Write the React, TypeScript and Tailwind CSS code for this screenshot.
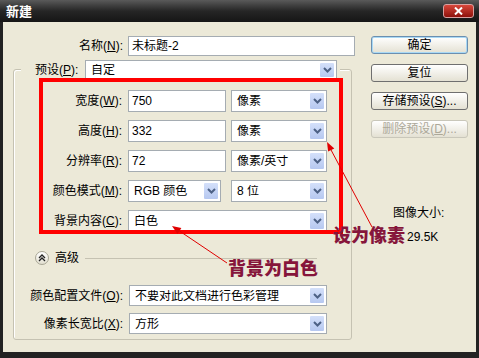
import React from 'react';

// XP-style combo arrow
const Chevron = () => (
  <svg width="9" height="6" viewBox="0 0 9 6">
    <path d="M1 1l3.5 3.5L8 1" stroke="#4D6185" strokeWidth="2" fill="none" />
  </svg>
);

function Label({ text, k, className }: { text: string; k: string; className: string }) {
  return (
    <span className={`shrink-0 text-right ${className}`}>
      {text}(<u>{k}</u>):
    </span>
  );
}

function Field({ value, className }: { value: string; className: string }) {
  return (
    <div className={`flex h-full items-center border border-[#A5ACB2] bg-white pl-[3px] ${className}`}>
      {value}
    </div>
  );
}

function Select({ value, className }: { value: string; className: string }) {
  return (
    <div className={`flex h-full items-center border border-[#A5ACB2] bg-white ${className}`}>
      <span className="flex-1 pl-[5px] whitespace-nowrap overflow-hidden">{value}</span>
      <div className="mr-px flex h-[calc(100%-2px)] w-[16px] items-center justify-center rounded-[2px] border border-white bg-gradient-to-b from-[#D4E0FA] to-[#B6C8F0]">
        <Chevron />
      </div>
    </div>
  );
}

function Button({ children, kind = 'normal' }: { children: React.ReactNode; kind?: 'normal' | 'default' | 'disabled' }) {
  const look =
    kind === 'default'
      ? 'border-[#6B8FB0] shadow-[inset_0_0_0_1px_#A9D9F5] text-black'
      : kind === 'disabled'
        ? 'border-[#C9C7BA] text-[#ACA899]'
        : 'border-[#6F6F6F] text-black';
  return (
    <div
      className={`flex h-[18px] w-[97px] items-center justify-center rounded-[3px] border bg-gradient-to-b from-white to-[#E4E1D3] ${look}`}
    >
      {children}
    </div>
  );
}

export default function App() {
  return (
    <div className="relative flex h-[358px] w-[479px] flex-col overflow-hidden bg-[#222222] text-[12px] leading-none text-black font-['Liberation_Sans','Noto_Sans_CJK_SC',sans-serif]">
      {/* Title bar */}
      <div className="flex h-[22px] shrink-0 items-center justify-between bg-gradient-to-b from-[#5A5A5A] via-[#262626] to-[#151515] pl-[6px] pr-[5px]">
        <span className="text-[13px] font-bold text-white">新建</span>
        <div className="flex h-[14px] w-[31px] items-center justify-center rounded-[3px] border border-[#D8A0A0] bg-gradient-to-b from-[#D8463A] to-[#8E0F0A]">
          <svg width="9" height="8" viewBox="0 0 9 8">
            <path d="M1 0.5l7 7M8 0.5l-7 7" stroke="white" strokeWidth="2" />
          </svg>
        </div>
      </div>

      {/* Body */}
      <div className="mx-[3px] mb-[6px] flex flex-1 bg-[#ECE9D8]">
        {/* Left column */}
        <div className="w-[358px] shrink-0 pl-[10px] pt-[14px]">
          <div className="flex h-[20px] items-center">
            <Label text="名称" k="N" className="w-[110px]" />
            <Field value="未标题-2" className="ml-[5px] w-[227px]" />
          </div>

          {/* Group box */}
          <div className="mt-[13px] h-[271px] w-[339px] rounded-[3px] border border-[#C5C2B2] shadow-[inset_1px_1px_0_#fff]">
            {/* Preset row sits on the frame line */}
            <div className="-mt-[10px] ml-[7px] flex h-[20px] w-[319px] items-center bg-[#ECE9D8]">
              <span className="w-[64px] shrink-0 pl-[14px]">
                预设(<u>P</u>):
              </span>
              <Select value="自定" className="w-[252px]" />
            </div>

            {/* Highlighted area */}
            <div className="relative -mt-[2px] ml-[25px] h-[156px] w-[304px] pt-[12px]">
              <div className="flex flex-col gap-[8px]">
                <div className="flex h-[22px] items-center">
                  <Label text="宽度" k="W" className="w-[83px]" />
                  <Field value="750" className="ml-[6px] w-[98px]" />
                  <Select value="像素" className="ml-[5px] w-[96px]" />
                </div>
                <div className="flex h-[22px] items-center">
                  <Label text="高度" k="H" className="w-[83px]" />
                  <Field value="332" className="ml-[6px] w-[98px]" />
                  <Select value="像素" className="ml-[5px] w-[96px]" />
                </div>
                <div className="flex h-[22px] items-center">
                  <Label text="分辨率" k="R" className="w-[83px]" />
                  <Field value="72" className="ml-[6px] w-[98px]" />
                  <Select value="像素/英寸" className="ml-[5px] w-[96px]" />
                </div>
                <div className="flex h-[22px] items-center">
                  <Label text="颜色模式" k="M" className="w-[83px]" />
                  <Select value="RGB 颜色" className="ml-[6px] w-[93px]" />
                  <Select value="8 位" className="ml-[10px] w-[96px]" />
                </div>
                <div className="flex h-[22px] items-center">
                  <Label text="背景内容" k="C" className="w-[83px]" />
                  <Select value="白色" className="ml-[6px] w-[199px]" />
                </div>
              </div>
              <div className="pointer-events-none absolute inset-0 border-4 border-[#FF0000]" />
            </div>

            {/* Advanced */}
            <div className="mt-[17px] flex h-[14px] items-center">
              <div className="ml-[21px] flex h-[14px] w-[14px] items-center justify-center rounded-full border border-[#A8A695] bg-gradient-to-b from-white to-[#E2DFD0]">
                <svg width="8" height="8" viewBox="0 0 8 8">
                  <path d="M1 4l3-3 3 3M1 7l3-3 3 3" stroke="#222" strokeWidth="1.3" fill="none" />
                </svg>
              </div>
              <span className="ml-[6px]">高级</span>
              <div className="ml-[6px] h-px w-[232px] bg-[#C5C2B2]" />
            </div>

            <div className="mt-[20px] flex h-[21px] items-center">
              <Label text="颜色配置文件" k="O" className="w-[109px]" />
              <Select value="不要对此文档进行色彩管理" className="ml-[6px] w-[198px]" />
            </div>
            <div className="mt-[7px] flex h-[21px] items-center">
              <Label text="像素长宽比" k="X" className="w-[109px]" />
              <Select value="方形" className="ml-[6px] w-[198px]" />
            </div>
          </div>
        </div>

        {/* Right column */}
        <div className="ml-[10px] flex flex-col pt-[14px]">
          <Button kind="default">确定</Button>
          <div className="mt-[10px]">
            <Button>复位</Button>
          </div>
          <div className="mt-[10px]">
            <Button>
              存储预设(<u>S</u>)...
            </Button>
          </div>
          <div className="mt-[10px]">
            <Button kind="disabled">
              删除预设(<u>D</u>)...
            </Button>
          </div>
          <span className="ml-[22px] mt-[69px]">图像大小:</span>
          <span className="ml-[36px] mt-[12px]">29.5K</span>
        </div>
      </div>

      {/* Red annotations drawn over the dialog */}
      <svg className="pointer-events-none absolute inset-0" width="479" height="358">
        <line x1="372" y1="227" x2="330" y2="148" stroke="#E00000" strokeWidth="1" />
        <polygon points="327,142 334.3,148.4 328.1,151.6" fill="#E00000" />
        <line x1="227" y1="263" x2="178" y2="230" stroke="#E00000" strokeWidth="1" />
        <polygon points="172,226 181.4,228.1 177.5,233.9" fill="#E00000" />
      </svg>
      <span className="absolute left-[333px] top-[227px] text-[18px] font-black leading-[18px] text-[#86153B]">
        设为像素
      </span>
      <span className="absolute left-[228px] top-[260px] text-[18px] font-black leading-[18px] text-[#86153B]">
        背景为白色
      </span>
    </div>
  );
}
